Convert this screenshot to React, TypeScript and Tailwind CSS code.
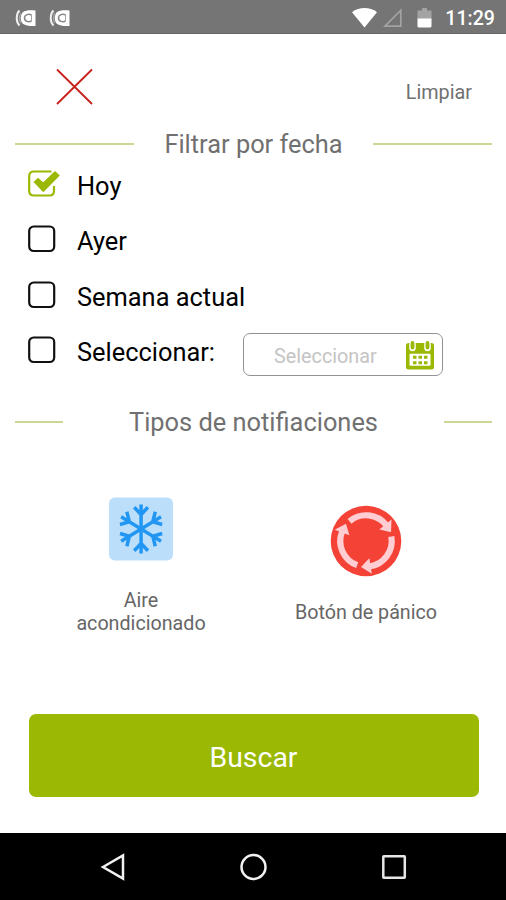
import { useState } from "react";

const DATE_OPTIONS = ["Hoy", "Ayer", "Semana actual", "Seleccionar:"];

function StatusBar() {
  return (
    <div className="flex h-[34px] items-center border-b border-[#666666] bg-[#757575] pl-[15px] pr-[11px] text-white">
      <div className="flex gap-[13px]">
        <CastBadge />
        <CastBadge />
      </div>
      <svg className="ml-auto" width="82" height="24" viewBox="0 0 82 24">
        <path d="M0 7.2C7.5 1.7 17.5 1.7 25 7.2L12.5 22.5Z" fill="#fff" />
        <path d="M33 21.2 48.8 5.2V21.2Z" fill="none" stroke="#a3a3a3" strokeWidth="1.7" />
        <path d="M70 3h5v2.4h4.5V14h-14V5.4H70Z" fill="#a3a3a3" />
        <path d="M65.5 13.5h14V21q0 1.5-1.5 1.5H67q-1.5 0-1.5-1.5Z" fill="#fff" />
      </svg>
      <span className="ml-[11px] pt-[4px] text-[19.6px] leading-6 font-medium">11:29</span>
    </div>
  );
}

function CastBadge() {
  return (
    <svg className="relative top-[1px]" width="21" height="18" viewBox="0 0 21 18">
      <path d="M7.5 3.5C11 1 15 1.2 20.5 1.5V17C15 17.2 11 17 7.5 14.5C5 11 5 7 7.5 3.5Z" fill="#fff" />
      <path d="M4.5 1.5C.8 5 .8 13 4.5 16.5" fill="none" stroke="#eee" strokeWidth="2" />
      <path d="M6 4C4 7 4 11 6 14" fill="none" stroke="#a8a8a8" strokeWidth="1.2" />
      <path d="M16.5 6C14 4.600 9.500 5.500 9.500 9s4.500 4.400 7 3" fill="none" stroke="#858585" strokeWidth="1.5" />
      <path d="M16.500 6V12" fill="none" stroke="#a3a3a3" strokeWidth="1" />
    </svg>
  );
}

function SectionTitle({ title, lineClass }: { title: string; lineClass: string }) {
  return (
    <div className="flex h-8 items-center justify-between pl-[15px] pr-[14px]">
      <span className={`h-[2px] bg-[#ccd796] ${lineClass}`} />
      <h2 className="text-[25.4px] leading-[30px] text-[#707070]">{title}</h2>
      <span className={`h-[2px] bg-[#ccd796] ${lineClass}`} />
    </div>
  );
}

function CheckBox({ checked }: { checked: boolean }) {
  return (
    <svg className="shrink-0" width="32" height="30" viewBox="0 0 32 30">
      {checked ? (
        <>
          <path
            d="M23.5 2.5H6Q1.2 2.5 1.2 7V22Q1.2 26.5 6 26.5H21.5Q26 26.5 26 22V17"
            fill="none"
            stroke="#9bb803"
            strokeWidth="2.2"
          />
          <path d="M5.5 13 10 8.7 15.2 13.3 27 2 31.8 6.5 15.3 23.2Z" fill="#9bb803" />
        </>
      ) : (
        <rect x="1.2" y="2.5" width="25" height="24.5" rx="4.5" fill="none" stroke="#111" strokeWidth="2.2" />
      )}
    </svg>
  );
}

function CalendarIcon() {
  return (
    <svg width="30" height="30" viewBox="0 0 30 30">
      <rect x="1" y="3" width="28" height="26.5" rx="2.5" fill="#9bb803" />
      <path d="M7.5 2.5V8M22.5 2.5V8" stroke="#fff" strokeWidth="6.5" strokeLinecap="round" />
      <path d="M7.5 3V7.5M22.5 3V7.5" stroke="#9bb803" strokeWidth="3.8" strokeLinecap="round" />
      <rect x="4.5" y="13.8" width="21" height="12" rx="1" fill="#fff" />
      <path
        d="M8 15.7h3.5v3H8Zm5.5 0H17v3h-3.5Zm5.5 0h3.5v3H19ZM8 21.2h3.5v3H8Zm5.5 0H17v3h-3.5Zm5.5 0h3.5v3H19Z"
        fill="#9bb803"
      />
    </svg>
  );
}

function SnowflakeIcon() {
  return (
    <svg width="64" height="64" viewBox="0 0 64 64">
      <rect y=".5" width="64" height="63" rx="6" fill="#bbdefb" />
      <g fill="none" stroke="#2196f3" strokeWidth="3.7" transform="translate(2 0) scale(.94 1)">
        {[0, 60, 120, 180, 240, 300].map((angle) => (
          <path key={angle} d="M32 32V7.5M24.7 10.3 32 17.6 39.3 10.3" transform={`rotate(${angle} 32 32)`} />
        ))}
      </g>
    </svg>
  );
}

function PanicIcon() {
  return (
    <svg width="72" height="72" viewBox="0 0 72 72">
      <circle cx="36" cy="36" r="35.3" fill="#f44336" />
      {[0, 120, 240].map((angle) => (
        <g key={angle} transform={`rotate(${angle} 36 36)`}>
          <path d="M19.5 16.3A25.7 25.7 0 0 1 56.3 20.2" fill="none" stroke="#ffcdd2" strokeWidth="6.2" />
          <path d="M61.5 14.5 61 27.3 49.3 24.5Z" fill="#ffcdd2" />
        </g>
      ))}
    </svg>
  );
}

export default function App() {
  const [selected, setSelected] = useState(0);

  return (
    <div className="flex h-[900px] w-[506px] flex-col bg-white font-['Roboto',sans-serif]">
      <StatusBar />

      <main className="flex flex-1 flex-col">
        <header className="flex h-[94px] items-start justify-between pl-[56px] pr-[34px] pt-[34px]">
          <button type="button" aria-label="Cerrar">
            <svg width="37" height="37" viewBox="0 0 37 37">
              <path d="M1 1.5 36 36M36 1.5 1 36" stroke="#c7201a" strokeWidth="1.8" />
            </svg>
          </button>
          <button type="button" className="mt-[13px] text-[19.8px] leading-6 text-[#707070]">
            Limpiar
          </button>
        </header>

        <SectionTitle title="Filtrar por fecha" lineClass="w-[119px]" />

        <div className="-mt-1 flex flex-col">
          {DATE_OPTIONS.map((option, index) => (
            <div key={option} className="flex h-[55.5px] items-center">
              <button
                type="button"
                className="flex items-center gap-[17px] pl-[28px] text-[25.4px] leading-[30px] text-black"
                onClick={() => setSelected(index)}
              >
                <CheckBox checked={selected === index} />
                <span className="pt-[4px]">{option}</span>
              </button>
              {option === "Seleccionar:" && (
                <div className="ml-[28px] mt-[9px] flex h-[43px] w-[200px] items-center justify-between rounded-[7px] border-[1.5px] border-[#929292] pl-[30px] pr-[7px]">
                  <span className="pt-[4px] text-[19.8px] leading-6 text-[#c4c4c4]">Seleccionar</span>
                  <CalendarIcon />
                </div>
              )}
            </div>
          ))}
        </div>

        <div className="mt-[28px]">
          <SectionTitle title="Tipos de notifiaciones" lineClass="w-[48px]" />
        </div>

        <div className="mt-[59px] flex text-center text-[19.7px] leading-[23px] text-[#666666]">
          <button type="button" className="ml-[61px] flex w-[160px] flex-col items-center">
            <SnowflakeIcon />
            <span className="mt-[28px]">
              Aire
              <br />
              acondicionado
            </span>
          </button>
          <button type="button" className="ml-[65px] mt-[8px] flex w-[160px] flex-col items-center">
            <PanicIcon />
            <span className="mt-[24px]">Botón de pánico</span>
          </button>
        </div>

        <button
          type="button"
          className="ml-[28.5px] mr-[27.5px] mb-[36px] mt-auto h-[83.5px] rounded-[7px] bg-[#9bb803] pt-[6px] text-[28.4px] text-white"
        >
          Buscar
        </button>
      </main>

      <nav className="flex h-[67px] items-center justify-center gap-[113px] bg-black">
        <svg width="28" height="28" viewBox="0 0 28 28" fill="none" stroke="#f2f2f2" strokeWidth="2.5">
          <path d="M5 14 25 2.5V25.5Z" />
        </svg>
        <svg width="28" height="28" viewBox="0 0 28 28" fill="none" stroke="#f2f2f2" strokeWidth="2.5">
          <circle cx="14.5" cy="14" r="12" />
        </svg>
        <svg width="28" height="28" viewBox="0 0 28 28" fill="none" stroke="#e6e6e6" strokeWidth="2.5">
          <rect x="3.3" y="3.3" width="21.5" height="21.5" rx=".5" />
        </svg>
      </nav>
    </div>
  );
}
